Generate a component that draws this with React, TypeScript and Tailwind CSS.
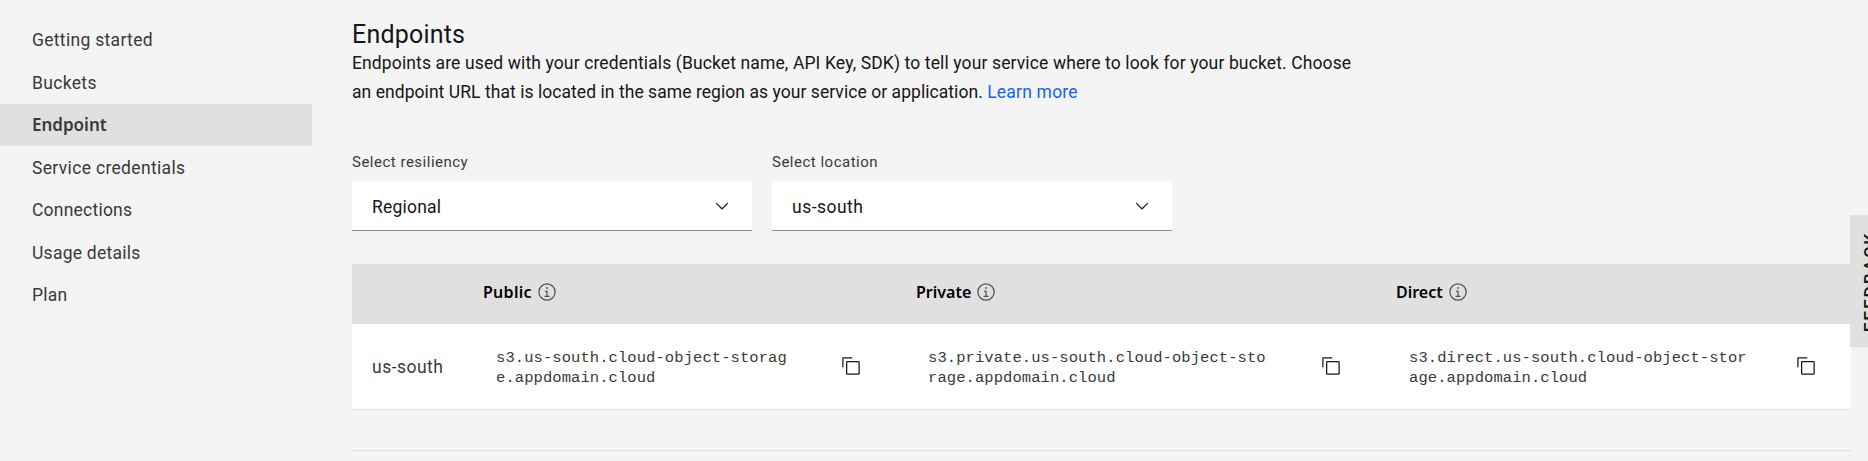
const navItems = [
  { label: "Getting started", tracking: "tracking-[0.31px]" },
  { label: "Buckets", tracking: "tracking-[0.33px]" },
  { label: "Endpoint", tracking: "", active: true },
  { label: "Service credentials", tracking: "tracking-[0.33px]" },
  { label: "Connections", tracking: "tracking-[0.22px]" },
  { label: "Usage details", tracking: "tracking-[0.25px]" },
  { label: "Plan", tracking: "tracking-[0.25px]" },
];

const endpoints = [
  { title: "Public", lines: ["s3.us-south.cloud-object-storag", "e.appdomain.cloud"], width: "w-[433px]", pad: "pl-[13px] pr-[55px]", tracking: "tracking-[0.28px]" },
  { title: "Private", lines: ["s3.private.us-south.cloud-object-sto", "rage.appdomain.cloud"], width: "w-[480px]", pad: "pl-3 pr-[55px]", tracking: "tracking-[0px]" },
  { title: "Direct", lines: ["s3.direct.us-south.cloud-object-stor", "age.appdomain.cloud"], width: "w-[455px]", pad: "pl-[13px] pr-[35px]", tracking: "tracking-[0px]" },
];

function ChevronDown() {
  return (
    <svg className="size-5" viewBox="0 0 16 16" fill="#161616">
      <path d="M8 11L3 6 3.7 5.3 8 9.6 12.3 5.3 13 6z" />
    </svg>
  );
}

function InfoIcon() {
  return (
    <svg className="size-5" viewBox="0 0 32 32" fill="#525252">
      <path d="M17 22L17 14 13 14 13 16 15 16 15 22 12 22 12 24 20 24 20 22 17 22zM16 8a1.5 1.5 0 1 0 1.5 1.5A1.5 1.5 0 0 0 16 8z" />
      <path d="M16 30A14 14 0 1 1 30 16 14 14 0 0 1 16 30zM16 4A12 12 0 1 0 28 16 12 12 0 0 0 16 4z" />
    </svg>
  );
}

function CopyIcon() {
  return (
    <svg className="mb-0.5 size-5" viewBox="0 0 32 32" fill="#161616">
      <path d="M28 10V28H10V10H28m0-2H10a2 2 0 0 0-2 2V28a2 2 0 0 0 2 2H28a2 2 0 0 0 2-2V10a2 2 0 0 0-2-2z" />
      <path d="M4 18H2V4A2 2 0 0 1 4 2H18V4H4z" />
    </svg>
  );
}

function Dropdown({ label, value, tracking }: { label: string; value: string; tracking: string }) {
  return (
    <div className="w-[400px]">
      <div className="mb-[9px] h-5 text-[15px] leading-5 tracking-[0.5px] text-[#393939]">{label}</div>
      <button className="flex h-[50px] w-full items-center justify-between border-b border-[#8d8d8d] bg-white pr-5 pl-5 text-[#161616]">
        <span className={`${tracking} pt-1`}>{value}</span>
        <ChevronDown />
      </button>
    </div>
  );
}

export default function App() {
  return (
    <div className="relative flex h-[461px] w-[1868px] overflow-hidden bg-[#f4f4f4] font-['Roboto',sans-serif] text-[17.5px] text-[#161616]">
      <nav className="w-[312px] shrink-0 pt-[18.9px]">
        {navItems.map((item) => (
          <a
            key={item.label}
            className={
              item.active
                ? "flex h-[42.5px] items-center bg-[#e0e0e0] pt-[0.5px] pl-8 font-['Noto_Sans',sans-serif] text-[17px] leading-6 font-semibold text-[#393939]"
                : `flex h-[42.5px] items-center pt-[0.5px] pl-8 text-[#393939] ${item.tracking}`
            }
          >
            {item.label}
          </a>
        ))}
      </nav>

      <main className="ml-10 w-[1499px] shrink-0 pt-[19px]">
        <h1 className="h-[30px] text-[25px] leading-[32px] tracking-[0.2px]">Endpoints</h1>
        <p className="leading-[29px] whitespace-nowrap">
          <span className="block tracking-[0.125px]">
            Endpoints are used with your credentials (Bucket name, API Key, SDK) to tell your service where to look for your bucket. Choose
          </span>
          <span className="block tracking-[0.055px]">
            an endpoint URL that is located in the same region as your service or application.{" "}
            <a className="tracking-[0.2px] text-[#0f62fe]">Learn more</a>
          </span>
        </p>

        <div className="mt-[45px] flex gap-5">
          <Dropdown label="Select resiliency" value="Regional" tracking="tracking-[0.22px]" />
          <Dropdown label="Select location" value="us-south" tracking="tracking-[0.48px]" />
        </div>

        <section className="mt-[33px] border-b border-[#e0e0e0] bg-white">
          <header className="flex h-[60px] bg-[#e0e0e0] pl-[131px]">
            {endpoints.map((e) => (
              <div key={e.title} className={`${e.width} flex h-14 items-center gap-[5px] font-['Noto_Sans',sans-serif] text-[16px] font-semibold text-black`}>
                <span className={e.tracking}>{e.title}</span>
                <InfoIcon />
              </div>
            ))}
          </header>
          <div className="flex h-[85px] items-center">
            <div className="w-[131px] pt-0.5 pl-5 tracking-[0.48px] text-[#393939]">us-south</div>
            {endpoints.map((e) => (
              <div key={e.title} className={`${e.width} ${e.pad} flex items-center justify-between`}>
                <code className="pt-0.5 font-['Liberation_Mono',monospace] text-[15.5px] leading-5 tracking-[0.08px] text-[#393939]">
                  {e.lines.map((line) => (
                    <span key={line} className="block">{line}</span>
                  ))}
                </code>
                <CopyIcon />
              </div>
            ))}
          </div>
        </section>
        <hr className="mt-10 border-t border-[#e0e0e0]" />
      </main>

      <button className="absolute top-[215px] left-[1850px] flex h-[132px] w-[42px] items-center justify-center bg-[#e0e0e0] pt-0.5 text-[17.5px] font-medium text-[#161616]">
        <span className="rotate-180 tracking-[1.8px] [writing-mode:vertical-rl]">FEEDBACK</span>
      </button>
    </div>
  );
}
